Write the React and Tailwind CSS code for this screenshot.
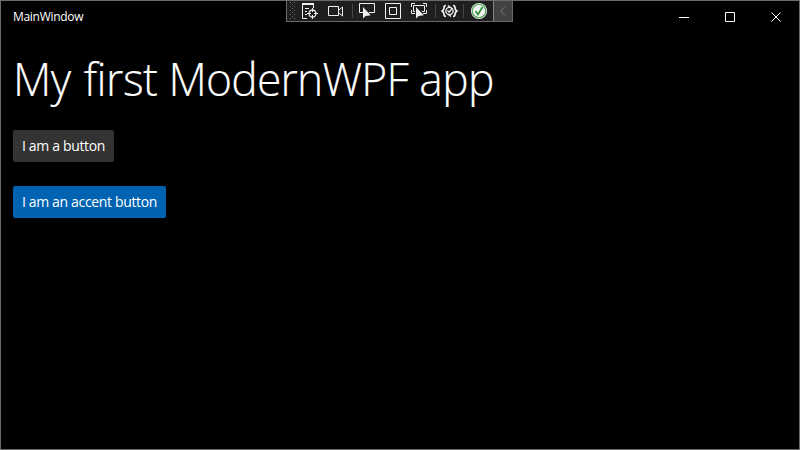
function Icon({ children, className = "" }) {
  return (
    <svg viewBox="0 0 18 18" fill="none" stroke="#f0f0f0" className={`h-[18px] w-[18px] shrink-0 ${className}`}>
      {children}
    </svg>
  );
}

function Separator({ className = "" }) {
  return <span className={`h-[14px] w-px shrink-0 bg-[#464646] ${className}`} />;
}

const cursor = "M0 0 V11.5 L2.7 9 L7.8 8.2 Z";

function DebugToolbar() {
  return (
    <div className="absolute -top-px left-[285px] flex h-[22px] w-[227px] items-start border border-[#6a6a6a] bg-[#1f1f1f]">
      <svg viewBox="0 0 6 18" className="ml-[3px] mt-px h-[18px] w-[6px] shrink-0" fill="#686868">
        {[0, 4, 8, 12, 16].map((y) => (
          <g key={y}>
            <rect x="0" y={y} width="1" height="1" />
            <rect x="4" y={y} width="1" height="1" />
            <rect x="2" y={y + 2} width="1" height="1" />
          </g>
        ))}
      </svg>
      <div className="mt-px flex h-[19px] items-start">
        <Icon className="ml-[5px]">
          <path d="M1 1.5h12M1 2.5h12" />
          <path d="M1.5 2v14.5H6M12.5 2v4M4 6.5h4M4 9.5h2M4 12.5h2" />
          <circle cx="11.5" cy="11.5" r="3.5" strokeWidth="1.3" />
          <path d="M11.5 6v4M11.5 13v4M6 11.5h4M13 11.5h4" />
        </Icon>
        <Icon className="ml-[8px]">
          <path d="M1.5 4.5h10v9h-10zM12 8l3.5-3v9L12 11" />
        </Icon>
        <Separator className="ml-[7px] mt-[2px]" />
        <Icon className="ml-[5px]">
          <path d="M5 10.5H1.5v-9h15v9H11" />
          <path d={cursor} transform="translate(5 5)" fill="#f0f0f0" stroke="none" />
        </Icon>
        <Icon className="ml-[8px]">
          <path d="M1.5 1.5h15v15h-15zM5.5 5.5h7v7h-7z" />
        </Icon>
        <Icon className="ml-[8px]">
          <path d="M1.5 5V1.5H5M13 1.5h3.5V5M1.5 8v3.5H5M13 11.5h3.5V8M5 9.5H3.5v-6h11v6H12" />
          <path d={cursor} transform="translate(6 5)" fill="#f0f0f0" stroke="none" />
        </Icon>
        <Separator className="ml-[7px] mt-[2px]" />
        <Icon className="ml-[5px]">
          <path
            d="M5 3.5c-2 0-2 1-2 2.2S2.5 8 1.2 9C2.5 10 3 11 3 12.3s0 2.2 2 2.2M12 3.5c2 0 2 1 2 2.2S14.5 8 15.8 9C14.5 10 14 11 14 12.3s0 2.2-2 2.2"
            strokeWidth="1.7"
          />
          <circle cx="8.5" cy="9" r="3.6" strokeWidth="1.3" />
          <path d="M7 3.5l2.5 2M10 14.5l-2.5-2M6.5 8.5l1.7 1.7 3-4" strokeWidth="1.3" />
        </Icon>
        <Separator className="ml-[4px] mt-[2px]" />
        <Icon className="ml-[6px]">
          <circle cx="9" cy="9" r="8" fill="#f3f3f3" stroke="none" />
          <circle cx="9" cy="9" r="6.7" stroke="#4aa650" strokeWidth="1.1" />
          <path d="M5.5 9l2.5 3.5 4.5-7.5" stroke="#2c9435" strokeWidth="1.7" />
        </Icon>
      </div>
      <div className="ml-auto flex h-full w-[19px] shrink-0 items-center justify-center border-l border-[#858585] bg-[#424242]">
        <svg viewBox="0 0 6 10" className="h-[10px] w-[6px]" fill="none" stroke="#777777">
          <path d="M5 .5L.8 5 5 9.5" />
        </svg>
      </div>
    </div>
  );
}

function WindowControls() {
  return (
    <div className="flex h-full text-white">
      {["M0 5.5h10", "M.5.5h9v9h-9z", "M.5.5l9 9M9.5.5l-9 9"].map((d) => (
        <button key={d} className="flex w-[46px] items-center justify-center">
          <svg viewBox="0 0 10 10" className="h-[10px] w-[10px]" fill="none" stroke="currentColor">
            <path d={d} />
          </svg>
        </button>
      ))}
    </div>
  );
}

export default function App() {
  return (
    <div className="relative h-[450px] w-[800px] overflow-hidden border border-[#6b6b6b] bg-black font-['Open_Sans','Noto_Sans',sans-serif] text-white">
      <header className="flex h-[31px] items-center justify-between pl-3">
        <span className="text-[12px] leading-4 tracking-[-0.3px]">MainWindow</span>
        <WindowControls />
      </header>
      <DebugToolbar />
      <main className="flex flex-col items-start pl-3 pt-[15px]">
        <h1 className="h-[62px] origin-left scale-x-[0.965] whitespace-nowrap text-[46px] font-light leading-[62px] tracking-[-0.5px] [-webkit-text-stroke:0.2px_white]">
          My <span className="ml-[2px]">first</span>{" "}
          <span className="tracking-[-0.8px]">ModernWPF</span> app
        </h1>
        <button className="mt-[21px] h-8 w-[101px] whitespace-nowrap rounded-[2px] bg-[#333333] text-[14px] leading-5 tracking-[-0.34px]">
          I am a button
        </button>
        <button className="mt-6 h-8 w-[153px] whitespace-nowrap rounded-[2px] bg-[#0063b1] text-[14px] leading-5 tracking-[-0.34px]">
          I am an accent button
        </button>
      </main>
    </div>
  );
}
